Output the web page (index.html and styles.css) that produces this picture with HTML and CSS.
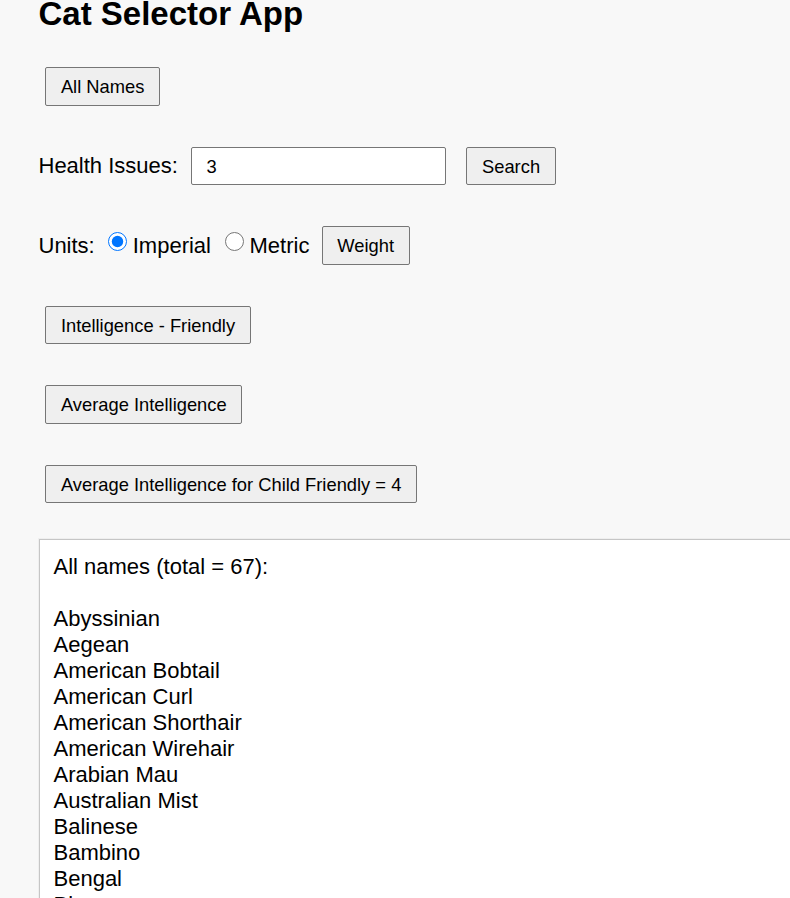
FILE: index.html
```html
<!DOCTYPE html>
<html lang="en">
<head>
<meta charset="utf-8">
<title>Cat Selector App</title>
<link rel="stylesheet" href="styles.css">
</head>
<body>
<div class="app">
  <h1 class="title">Cat Selector App</h1>
  <div class="controls">
    <div class="row"><button class="btn">All Names</button></div>
    <div class="row">
      <label class="label" for="health">Health Issues:</label>
      <input class="field" id="health" type="text" value="3">
      <button class="btn btn-search">Search</button>
    </div>
    <div class="row">
      <span class="label">Units:</span>
      <input class="radio" type="radio" name="units" id="imp" checked>
      <label class="radio-label" for="imp">Imperial</label>
      <input class="radio radio-2" type="radio" name="units" id="met">
      <label class="radio-label" for="met">Metric</label>
      <button class="btn btn-weight">Weight</button>
    </div>
    <div class="row"><button class="btn">Intelligence - Friendly</button></div>
    <div class="row"><button class="btn">Average Intelligence</button></div>
    <div class="row"><button class="btn">Average Intelligence for Child Friendly = 4</button></div>
  </div>
  <div class="output">All names (total = 67):

Abyssinian
Aegean
American Bobtail
American Curl
American Shorthair
American Wirehair
Arabian Mau
Australian Mist
Balinese
Bambino
Bengal
Birman
Bombay
British Longhair
British Shorthair
Burmese
Burmilla
California Spangled
Chantilly-Tiffany
Chartreux
Chausie
Cheetoh
Colorpoint Shorthair
Cornish Rex
Cymric
Cyprus
Devon Rex
Donskoy
Dragon Li
Egyptian Mau
European Burmese
Exotic Shorthair
Havana Brown
Himalayan
Japanese Bobtail
Javanese
Khao Manee
Korat
Kurilian
LaPerm
Maine Coon
Malayan
Manx
Munchkin
Nebelung
Norwegian Forest Cat
Ocicat
Oriental
Persian
Pixie-bob
Ragamuffin
Ragdoll
Russian Blue
Savannah
Scottish Fold
Selkirk Rex
Siamese
Siberian
Singapura
Snowshoe
Somali
Sphynx
Tonkinese
Toyger
Turkish Angora
Turkish Van
York Chocolate</div>
</div>
</body>
</html>
```
FILE: styles.css
```css
html {
  overflow: hidden;
  background: #f8f8f8;
}
body {
  margin: 0;
  background: #f8f8f8;
  font-family: "Liberation Sans", Arial, sans-serif;
  color: #000;
}
.app {
  padding: 0 0 0 38.5px;
}
.title {
  margin: 0;
  font-size: 33px;
  line-height: 28px;
  font-weight: bold;
}
.controls {
  display: flex;
  flex-direction: column;
  gap: 41px;
  padding-top: 39.3px;
}
.row {
  display: flex;
  align-items: center;
  height: 38.5px;
}
.label {
  font-size: 22px;
  line-height: 26px;
}
.btn {
  box-sizing: border-box;
  height: 38.5px;
  margin: 0 0 0 6.8px;
  padding: 1px 14.6px 0;
  font-family: "Liberation Sans", Arial, sans-serif;
  font-size: 18.33px;
  line-height: 20px;
  color: #000;
  background: #efefef;
  border: 1px solid #767676;
  border-radius: 2px;
}
.field {
  box-sizing: border-box;
  width: 255px;
  height: 38.5px;
  margin: 0 0 0 13px;
  padding: 1px 14.5px 0;
  font-family: "Liberation Sans", Arial, sans-serif;
  font-size: 18.33px;
  color: #000;
  background: #fff;
  border: 1px solid #767676;
  border-radius: 2px;
}
.btn-search {
  margin-left: 20.5px;
}
.radio {
  width: 18.5px;
  height: 18.5px;
  margin: 0 0 8px 13.5px;
  accent-color: #0075ff;
}
.radio-2 {
  margin-left: 14px;
}
.radio-label {
  margin-left: 6px;
  font-size: 22px;
  line-height: 26px;
}
.btn-weight {
  margin-left: 12.3px;
}
.output {
  margin-top: 35.8px;
  width: 800px;
  box-sizing: border-box;
  padding: 13.5px 14px;
  background: #fff;
  border: 1px solid #c6c6c6;
  box-shadow: 0 0 0 1px #efefef;
  font-size: 22px;
  line-height: 26px;
  white-space: pre;
}
```
